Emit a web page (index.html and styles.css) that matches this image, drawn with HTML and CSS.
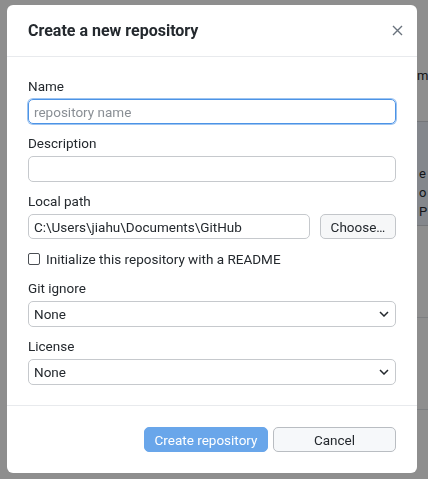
FILE: index.html
```html
<!DOCTYPE html>
<html>
<head>
<meta charset="utf-8">
<link rel="stylesheet" href="styles.css">
</head>
<body>
<div class="app">
  <div class="app-side"></div>
  <div class="app-main">
    <div class="app-top"><span class="t-m">m</span></div>
    <div class="app-band">
      <span class="t-ne">e</span>
      <span class="t-o">o</span>
      <span class="t-p">P</span>
    </div>
    <div class="app-row"></div>
    <div class="app-row"></div>
  </div>
</div>
<div class="overlay"></div>
<div class="dialog">
  <header class="dlg-header">
    <h1 class="dlg-title">Create a new repository</h1>
    <span class="close">
      <svg width="11" height="11" viewBox="0 0 11 11"><path d="M1 1L10 10M10 1L1 10" stroke="#6a737d" stroke-width="1.4" fill="none"/></svg>
    </span>
  </header>
  <div class="dlg-body">
    <div class="field">
      <div class="label">Name</div>
      <div class="input focus"><span class="placeholder">repository name</span></div>
    </div>
    <div class="field">
      <div class="label">Description</div>
      <div class="input"></div>
    </div>
    <div class="field">
      <div class="label">Local path</div>
      <div class="path-row">
        <div class="input grow">C:\Users\jiahu\Documents\GitHub</div>
        <div class="btn choose">Choose…</div>
      </div>
    </div>
    <div class="check">
      <span class="box"></span>
      <span>Initialize this repository with a README</span>
    </div>
    <div class="field">
      <div class="label">Git ignore</div>
      <div class="input select"><span>None</span>
        <svg width="10" height="6" viewBox="0 0 10 6"><path d="M1 1L5 5L9 1" stroke="#24292e" stroke-width="1.5" fill="none"/></svg>
      </div>
    </div>
    <div class="field">
      <div class="label">License</div>
      <div class="input select"><span>None</span>
        <svg width="10" height="6" viewBox="0 0 10 6"><path d="M1 1L5 5L9 1" stroke="#24292e" stroke-width="1.5" fill="none"/></svg>
      </div>
    </div>
  </div>
  <footer class="dlg-footer">
    <div class="btn primary">Create repository</div>
    <div class="btn cancel">Cancel</div>
  </footer>
</div>
</body>
</html>
```

FILE: styles.css
```css
* { box-sizing: border-box; }
html, body { margin: 0; padding: 0; }
body {
  width: 428px;
  height: 479px;
  overflow: hidden;
  font-family: Roboto, "Noto Sans", sans-serif;
  font-size: 13.5px;
  color: #24292e;
  background: #fff;
}
.app {
  display: flex;
  height: 479px;
}
.app-side { width: 417px; flex: none; }
.app-main {
  flex: 1;
  display: flex;
  flex-direction: column;
  font-size: 13px;
  color: #24292e;
}
.app-top {
  height: 122px;
  border-bottom: 1px solid #d1d5da;
  padding-top: 66px;
  line-height: 20px;
}
.app-band {
  height: 104px;
  background: #eef3fb;
  border-bottom: 1px solid #d1d5da;
  display: flex;
  flex-direction: column;
  padding-top: 42px;
  padding-left: 2px;
  line-height: 19px;
}
.app-row {
  height: 92px;
  border-bottom: 1px solid #e1e4e8;
}
.overlay {
  position: fixed;
  inset: 0;
  background: rgba(0, 0, 0, 0.445);
}
.dialog {
  position: absolute;
  left: 7px;
  top: 5px;
  width: 410px;
  height: 468px;
  background: #fff;
  border-radius: 6px;
  display: flex;
  flex-direction: column;
  overflow: hidden;
}
.dlg-header {
  height: 52px;
  flex: none;
  display: flex;
  align-items: center;
  justify-content: space-between;
  padding: 0 14px 0 21px;
  border-bottom: 1px solid #e8eaed;
}
.dlg-title {
  margin: 0;
  font-size: 16px;
  font-weight: 700;
  color: #24292e;
}
.close { display: flex; width: 11px; height: 11px; }
.dlg-body {
  flex: 1;
  padding: 19px 21px 0 21px;
  display: flex;
  flex-direction: column;
  gap: 9px;
}
.field { display: flex; flex-direction: column; gap: 3px; }
.label { line-height: 20px; height: 20px; color: #24292e; }
.input {
  height: 26px;
  border: 1px solid #c6c9cd;
  border-radius: 5px;
  padding: 0 5px;
  display: flex;
  align-items: center;
  color: #24292e;
  white-space: nowrap;
}
.input.focus {
  height: 25px;
  border: 1px solid #4c93e6;
  box-shadow: 0 0 0 1px rgba(76,147,230,0.55);
}
.placeholder { color: #8a8f95; }
.path-row { display: flex; gap: 10px; }
.path-row .input { height: 25px; }
.grow { flex: 1; }
.btn {
  height: 25px;
  border-radius: 5px;
  display: flex;
  align-items: center;
  justify-content: center;
  white-space: nowrap;
}
.choose {
  width: 76px;
  background: #f6f7f8;
  border: 1px solid #c3c6ca;
  color: #24292e;
}
.check {
  display: flex;
  align-items: center;
  gap: 6px;
  height: 20px;
  margin: 1px 0 0 0;
}
.box {
  width: 12px;
  height: 12px;
  border: 1px solid #4a4e53;
  border-radius: 2px;
  flex: none;
}
.select { justify-content: space-between; padding-right: 6px; }
.dlg-footer {
  height: 68px;
  flex: none;
  border-top: 1px solid #e8eaed;
  display: flex;
  justify-content: flex-end;
  align-items: center;
  gap: 5px;
  padding: 0 21px;
}
.primary {
  width: 124px;
  background: #69a6ea;
  color: #fff;
  border: 1px solid #69a6ea;
}
.cancel {
  width: 123px;
  background: #f6f8fa;
  border: 1px solid #b9bdc2;
  color: #24292e;
}
```
